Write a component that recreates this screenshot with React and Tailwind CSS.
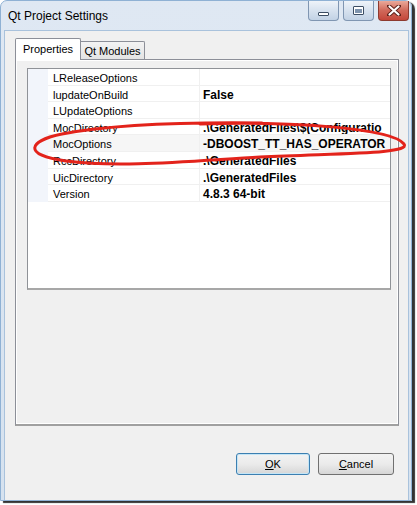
import React from 'react';

const rows = [
  { name: 'LReleaseOptions', value: '' },
  { name: 'lupdateOnBuild', value: 'False' },
  { name: 'LUpdateOptions', value: '' },
  { name: 'MocDirectory', value: '.\\GeneratedFiles\\$(Configuratio' },
  { name: 'MocOptions', value: '-DBOOST_TT_HAS_OPERATOR', selected: true },
  { name: 'RccDirectory', value: '.\\GeneratedFiles' },
  { name: 'UicDirectory', value: '.\\GeneratedFiles' },
  { name: 'Version', value: '4.8.3 64-bit' },
];

const font = { fontFamily: '"Liberation Sans", Arial, sans-serif' };

const CaptionButton = ({ children, close }) => (
  <div
    className={
      close
        ? 'w-[31px] h-[20px] rounded-b-[4px] border border-t-0 border-[#8d3a2f] bg-gradient-to-b from-[#e9a99a] via-[#d0685a] to-[#c4463a] flex items-center justify-center'
        : 'w-[31px] h-[20px] rounded-b-[4px] border border-t-0 border-[#8096b2] bg-gradient-to-b from-[#eef3f9] via-[#d7e2ef] to-[#c2d2e5] flex items-center justify-center'
    }
  >
    {children}
  </div>
);

export default function App() {
  return (
    <div className="relative w-[417px] h-[505px] bg-white" style={font}>
      <div className="w-[412px] h-[501px] border border-[#8fb1d4] rounded-t-[7px] bg-gradient-to-b from-[#dfe8f3] to-[#d6e2ef] flex flex-col shadow-[3px_2px_1px_rgba(0,0,0,0.8)]">
        {/* title bar */}
        <div className="h-[29px] flex items-start justify-between pl-[7px] pr-[2px]">
          <span className="mt-[8px] text-[12px] leading-[14px] text-black">Qt Project Settings</span>
          <div className="flex gap-[4px]">
            <CaptionButton>
              <div className="mt-[6px] w-[11px] h-[4px] border border-[#3c4d63] bg-white rounded-[1px]" />
            </CaptionButton>
            <CaptionButton>
              <div className="w-[11px] h-[9px] border border-[#3c4d63] bg-white rounded-[1px] flex items-center justify-center">
                <div className="w-[7px] h-[4px] mt-[1px] bg-[#7e93ad]" />
              </div>
            </CaptionButton>
            <CaptionButton close>
              <svg width="14" height="11" viewBox="0 0 14 11">
                <path d="M2 1 L12 10 M12 1 L2 10" stroke="#5a1f18" strokeWidth="4" strokeLinecap="round" />
                <path d="M2.5 1.5 L11.5 9.5 M11.5 1.5 L2.5 9.5" stroke="#ffffff" strokeWidth="2.2" strokeLinecap="round" />
              </svg>
            </CaptionButton>
          </div>
        </div>

        {/* client area */}
        <div className="flex-1 ml-[3px] mr-[2px] bg-[#f0f0f0] border border-b-0 border-[#a9c2dc] pt-[7px] pl-[10px] pr-[9px] flex flex-col">
          <div className="flex items-end h-[22px]">
            <div className="relative z-10 w-[66px] h-[22px] border border-b-0 border-[#8c8f98] bg-white rounded-t-[2px] flex items-center justify-center text-[11px] text-black">
              Properties
            </div>
            <div className="w-[64px] h-[19px] border border-l-0 border-b-0 border-[#8c8f98] bg-gradient-to-b from-[#f3f3f3] to-[#e3e3e3] rounded-tr-[2px] flex items-center justify-center text-[11px] text-black">
              Qt Modules
            </div>
          </div>
          <div className="-mt-px h-[367px] w-[384px] border border-[#8c8f98] border-b-2 border-b-[#a0a0a0] bg-[#f0f0f0] shadow-[inset_1px_1px_0_#ffffff,inset_-1px_-1px_0_#ffffff] pt-[8px] pl-[11px]">
            <div className="w-[364px] h-[222px] border border-[#8f9297] border-b-2 border-b-[#a7a7a7] bg-white overflow-hidden">
              {rows.map((r) => (
                <div key={r.name} className="flex h-[16.6px] overflow-hidden">
                  <div className="w-[20px] shrink-0 bg-[#f2f5fb]" />
                  <div className={'w-[152px] shrink-0 pl-[5px] border-b border-r border-[#f0f0f0] text-[11px] leading-[19px] text-black ' + (r.selected ? 'bg-[#f6f6f6]' : '')}>
                    {r.name}
                  </div>
                  <div className={'flex-1 min-w-0 pl-[3px] border-b border-[#f0f0f0] text-[12px] leading-[19px] font-bold text-black whitespace-nowrap overflow-hidden ' + (r.selected ? 'bg-[#f6f6f6]' : '')}>
                    {r.value}
                  </div>
                </div>
              ))}
            </div>
          </div>
          <div className="flex justify-end gap-[8px] mt-[27px] pr-[5px]">
            <button className="w-[74px] h-[22px] rounded-[3px] border border-[#3c7fb1] bg-gradient-to-b from-[#f2f2f2] via-[#ebebeb] to-[#d6d6d6] shadow-[inset_0_0_0_1px_#c4e5f6] text-[11px] text-black">
              <span className="underline underline-offset-[1px]">O</span>K
            </button>
            <button className="w-[76px] h-[22px] rounded-[3px] border border-[#707070] bg-gradient-to-b from-[#f2f2f2] via-[#ebebeb] to-[#d6d6d6] text-[11px] text-black">
              <span className="underline underline-offset-[1px]">C</span>ancel
            </button>
          </div>
        </div>
      </div>

      {/* red annotation ellipse */}
      <svg className="absolute left-0 top-0 pointer-events-none" width="417" height="505" viewBox="0 0 417 505">
        <path
          d="M200 124 C290 121 392 128 404 144 C412 154 340 153 260 157 C190 161 120 168 66 161 C22 155 28 141 62 134 C110 125 180 122 262 123"
          fill="none"
          stroke="#e3231b"
          strokeWidth="3"
          strokeLinecap="round"
        />
      </svg>
    </div>
  );
}
